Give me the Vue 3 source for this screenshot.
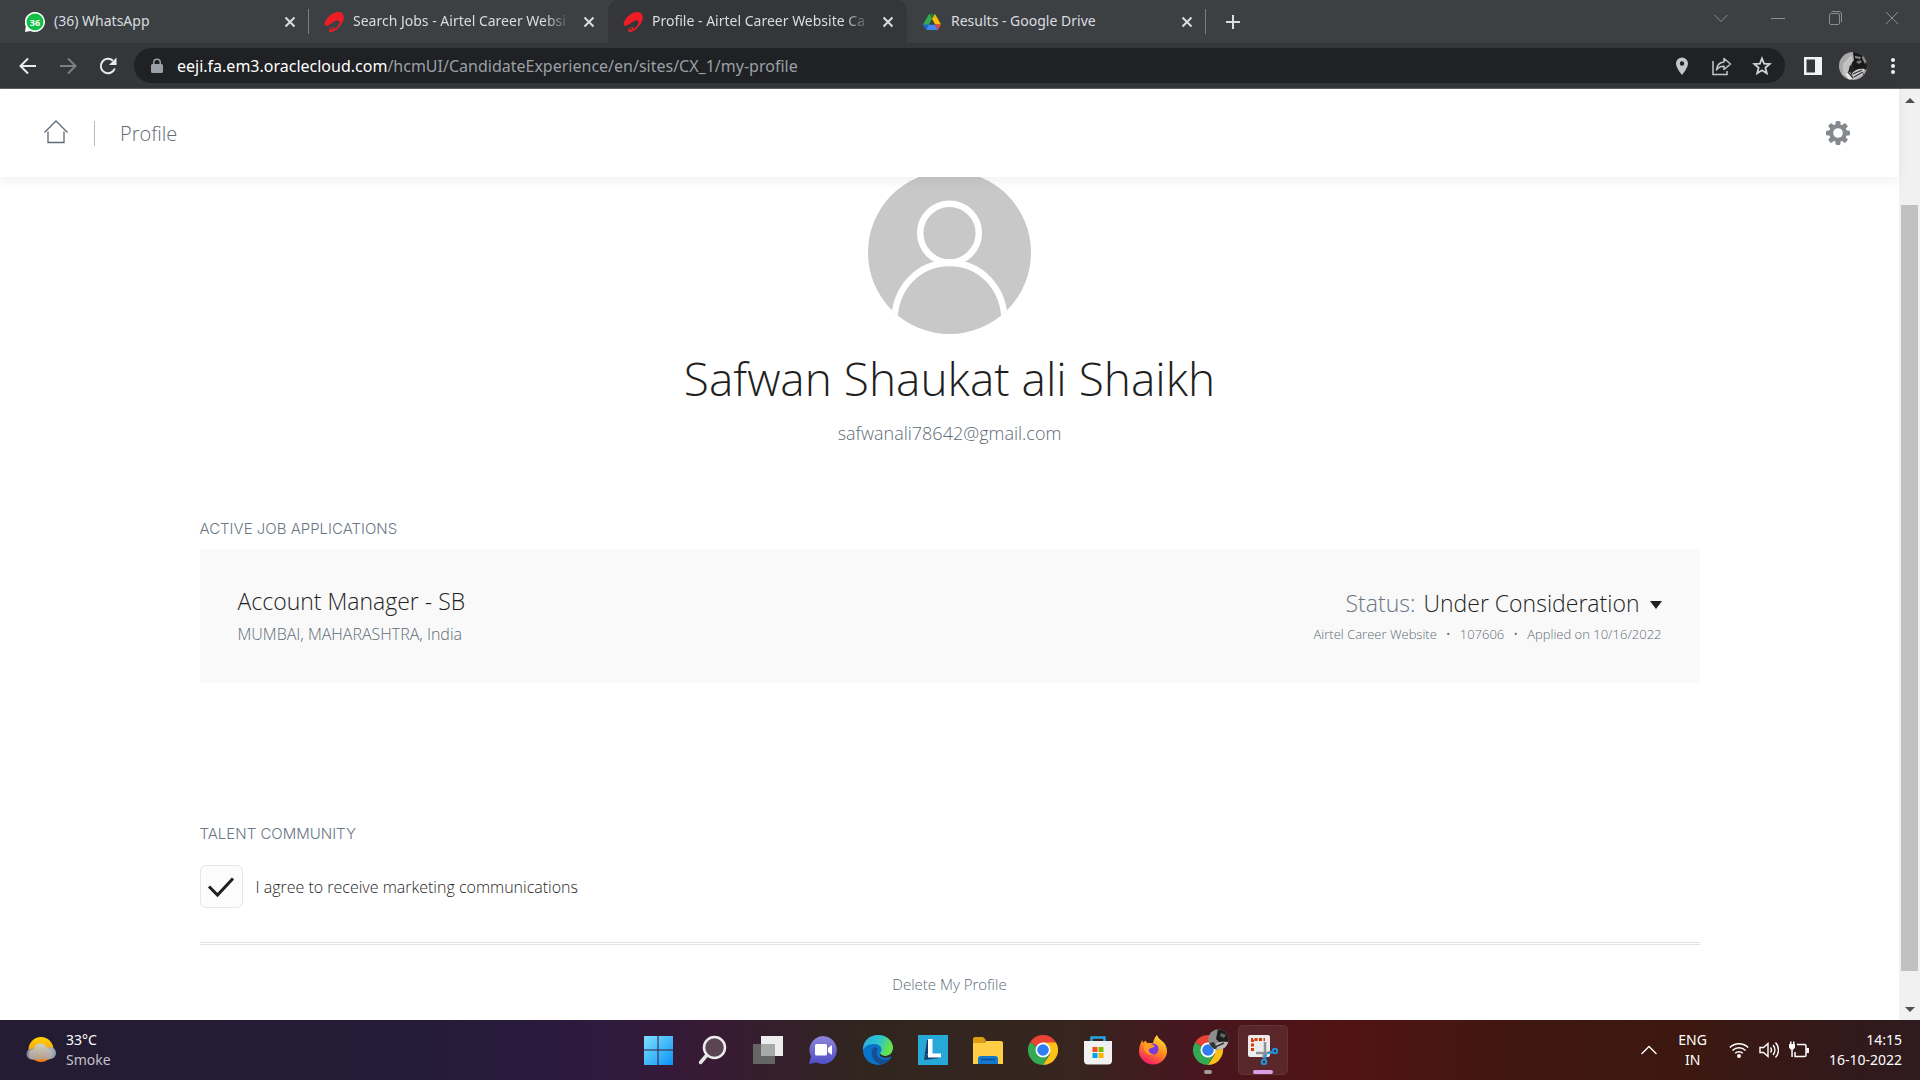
<script setup>
import { ref } from 'vue'

const tabs = [
  { title: '(36) WhatsApp', icon: 'whatsapp', divider: true },
  { title: 'Search Jobs - Airtel Career Websi', icon: 'airtel', faded: true },
  { title: 'Profile - Airtel Career Website Ca', icon: 'airtel', faded: true, active: true },
  { title: 'Results - Google Drive', icon: 'drive', divider: true },
]
const agreed = ref(true)
const meta = ['Airtel Career Website', '107606', 'Applied on 10/16/2022']
</script>

<template>
  <div class="desktop">
    <header class="browser">
      <div class="tab-strip">
        <div v-for="t in tabs" :key="t.title" class="tab" :class="{ active: t.active, divider: t.divider }">
          <svg v-if="t.icon === 'whatsapp'" class="favicon" viewBox="0 0 20 20">
            <path d="M10 0a10 10 0 1 1-4.600 18.900L0 20l.8-5.700A10 10 0 0 1 10 0z" fill="#fff" />
            <circle cx="10" cy="10" r="8.500" fill="#12c143" />
            <text x="10" y="13.500" text-anchor="middle" class="badge">36</text>
          </svg>
          <svg v-else-if="t.icon === 'airtel'" class="favicon" viewBox="0 0 20 20">
            <path d="M1 10C0 12 .5 14.500 3 13.800c3-.8 6.500-4.800 10-5.300 2.500-.3 3.200 1.500 2.200 3.500-1.200 2.500-3.600 4.300-5.200 5.300.8-1.200.2-2.400-1.200-2.300C6 15.200 4.800 17.500 5.200 19c.6 1.600 3 1 5.800-.6 4.500-2.700 8.200-7.900 8.700-12C20.200 2.300 17.800 0 14 0 8.500 0 3 5.500 1 10zM6.700 17.900c-.5-.6.2-1.800 1.600-2.200.9-.1 1.200.4.7 1-.7.800-1.800 1.500-2.300 1.200z" fill="#ee1c25" />
          </svg>
          <svg v-else class="favicon" viewBox="0 0 20 20">
            <path d="M7 2h6L7.200 12.400 4.200 17 1 12.500z" fill="#34a853" />
            <path d="M13 2l6 10.500h-6L7 2z" fill="#fbbc04" />
            <path d="M7 2h6l-3 5.200z" fill="#188038" />
            <path d="M1 12.500h6L4.300 18z" fill="#1967d2" />
            <path d="M7 12.500h6L16 18H4.300z" fill="#4285f4" />
            <path d="M13 12.500h6L16 18z" fill="#ea4335" />
            <path d="M10 7.200l3 5.300H7z" fill="#3c4043" />
          </svg>
          <span class="tab-title" :class="{ faded: t.faded }">{{ t.title }}</span>
          <button class="tab-close" aria-label="Close tab">
            <svg width="12" height="12" viewBox="0 0 12 12"><path d="M1.500 1.500l9 9M10.500 1.500l-9 9" stroke="#dadce0" stroke-width="2" /></svg>
          </button>
        </div>
        <button class="new-tab" aria-label="New tab">
          <svg width="16" height="16" viewBox="0 0 16 16"><path d="M8 1v14M1 8h14" stroke="#dadce0" stroke-width="2" /></svg>
        </button>
        <div class="window-controls">
          <button aria-label="Search tabs"><svg width="16" height="16" viewBox="0 0 16 16" class="thin"><path d="M1.500 5L8 11.500 14.500 5" /></svg></button>
          <button aria-label="Minimize"><svg width="16" height="16" viewBox="0 0 16 16" class="thin"><path d="M1 8.500h14" /></svg></button>
          <button aria-label="Restore"><svg width="16" height="16" viewBox="0 0 16 16" class="thin"><rect x="2.500" y="3.500" width="10" height="11" rx="1.500" /><path d="M4.500 1.500H12a2.500 2.500 0 0 1 2.500 2.500v8" /></svg></button>
          <button aria-label="Close window"><svg width="16" height="16" viewBox="0 0 16 16" class="thin"><path d="M2 2l12 12M14 2L2 14" /></svg></button>
        </div>
      </div>

      <div class="toolbar">
        <button class="nav" aria-label="Back"><svg width="20" height="20" viewBox="0 0 20 20" fill="none" stroke="#e8eaed" stroke-width="2"><path d="M18 10H3M10 2.500L2.500 10l7.500 7.500" /></svg></button>
        <button class="nav" aria-label="Forward"><svg width="20" height="20" viewBox="0 0 20 20" fill="none" stroke="#7d8083" stroke-width="2"><path d="M2 10h15M10 2.500l7.500 7.500-7.500 7.500" /></svg></button>
        <button class="nav" aria-label="Reload"><svg width="20" height="20" viewBox="0 0 20 20" fill="none" stroke="#e8eaed" stroke-width="2"><path d="M16.800 12.500A7.200 7.200 0 1 1 15 4.800" /><path d="M18.500 1.500v7.500H11z" fill="#e8eaed" stroke="none" /></svg></button>
        <div class="omnibox">
          <svg width="12" height="16" viewBox="0 0 12 16"><path d="M1.500 6H2V4.500a4 4 0 0 1 8 0V6h.5A1.500 1.500 0 0 1 12 7.500v6A1.500 1.500 0 0 1 10.500 15h-9A1.500 1.500 0 0 1 0 13.500v-6A1.500 1.500 0 0 1 1.500 6zm2 0h5V4.500a2.500 2.500 0 0 0-5 0z" fill="#9aa0a6" /></svg>
          <span class="url"><b>eeji.fa.em3.oraclecloud.com</b>/hcmUI/CandidateExperience/en/sites/CX_1/my-profile</span>
          <div class="omni-actions">
            <button aria-label="Location"><svg width="20" height="20" viewBox="0 0 20 20"><path d="M10 1.500a6 6 0 0 0-6 6c0 4.500 6 11.500 6 11.500s6-7 6-11.500a6 6 0 0 0-6-6zm0 8.200a2.200 2.200 0 1 1 0-4.400 2.200 2.200 0 0 1 0 4.400z" fill="#c4c6c8" /></svg></button>
            <button aria-label="Share"><svg width="20" height="20" viewBox="0 0 20 20" fill="none" stroke="#c4c6c8" stroke-width="1.500"><path d="M1 5v13.500h14V15" /><path d="M12 2.500L18.500 8 12 13.500v-3.300c-3.500 0-6 1.200-7.500 3.800.3-4.300 2.700-7.500 7.500-8z" stroke-linejoin="round" /></svg></button>
            <button aria-label="Bookmark"><svg width="20" height="20" viewBox="0 0 20 20" fill="none" stroke="#d0d2d4" stroke-width="1.800"><path d="M10 2.500l2.100 5.200 5.600.4-4.300 3.600 1.400 5.500-4.800-3-4.800 3 1.400-5.500L2.300 8.100l5.600-.4z" /></svg></button>
          </div>
        </div>
        <div class="extras">
          <button aria-label="Side panel"><svg width="20" height="20" viewBox="0 0 20 20"><path d="M1 1h18v18H1z" fill="#f1f3f4" /><path d="M3.500 3.500h8.500v13H3.500z" fill="#35363a" /></svg></button>
          <button aria-label="Account"><svg width="28" height="28" viewBox="0 0 28 28"><defs><clipPath id="face"><circle cx="14" cy="14" r="14" /></clipPath></defs><g clip-path="url(#face)"><rect width="28" height="28" fill="#a9a9a9" /><path d="M14 0h14v17l-6 3-8-3-2-5 3-4z" fill="#1a1a1a" /><path d="M16 4l6 1-1 2-5-1zM24 2l4 6-2 4-3-6z" fill="#8c8c8c" /><path d="M17 10l4-2 2 2-3 2z" fill="#777" /><path d="M4 12l8-9 2 5-2 5-3 8-5 2z" fill="#c2c2c2" /><path d="M11 13l4 2 2 4-5 5-3-3z" fill="#222" /><path d="M13 21c4-4 8-5 13-4l-3 6-8 4z" fill="#cfcfcf" /><path d="M6 22l5-2 3 6-4 2z" fill="#e6e6e6" /><path d="M14 22l9-4M15 25l9-5M9 20l5 6M24 22l4 2" stroke="#333" stroke-width="1.300" /></g></svg></button>
          <button aria-label="Menu"><svg width="6" height="20" viewBox="0 0 6 20" fill="#f1f3f4"><circle cx="3" cy="4" r="2" /><circle cx="3" cy="10" r="2" /><circle cx="3" cy="16" r="2" /></svg></button>
        </div>
      </div>
    </header>

    <div class="viewport">
      <div class="page">
        <nav class="page-header">
          <a href="#" class="home" aria-label="Home"><svg width="26" height="26" viewBox="0 0 26 26" fill="none" stroke="#5d6b77" stroke-width="1.300"><path d="M1.500 13.500L13 2l11.500 11.500M5 12.500v11h16v-11" /></svg></a>
          <span class="crumb">Profile</span>
          <button class="gear" aria-label="Settings">
            <svg width="24" height="24" viewBox="0 0 24 24"><g fill="#85898d"><circle cx="12" cy="12" r="9" /><rect v-for="a in [0, 45, 90, 135]" :key="a" x="9.500" y="0" width="5" height="24" rx="1.500" :transform="`rotate(${a} 12 12)`" /></g><circle cx="12" cy="12" r="4.800" fill="#fff" /></svg>
          </button>
        </nav>

        <main class="content">
          <section class="person">
            <svg class="avatar" viewBox="0 0 164 164">
              <defs><clipPath id="disc"><circle cx="82" cy="82" r="82" /></clipPath></defs>
              <g clip-path="url(#disc)">
                <rect width="164" height="164" fill="#c8c8c8" />
                <g fill="none" stroke="#fff" stroke-width="6.500">
                  <circle cx="82" cy="62.500" r="29.500" />
                  <path d="M26.500 152C26.500 118 50 92.500 82 92.500S137.500 118 137.500 152" />
                </g>
              </g>
            </svg>
            <h1>Safwan Shaukat ali Shaikh</h1>
            <p class="email">safwanali78642@gmail.com</p>
          </section>

          <section class="applications">
            <h2>ACTIVE JOB APPLICATIONS</h2>
            <article class="card">
              <div class="job">
                <a href="#" class="job-title">Account Manager - SB</a>
                <p class="place">MUMBAI, MAHARASHTRA, India</p>
              </div>
              <div class="state">
                <p class="status">Status: <button>Under Consideration<i class="caret"></i></button></p>
                <ul class="meta"><li v-for="m in meta" :key="m">{{ m }}</li></ul>
              </div>
            </article>
          </section>

          <section class="community">
            <h2>TALENT COMMUNITY</h2>
            <label class="agree">
              <span class="tick">
                <input v-model="agreed" type="checkbox" />
                <svg v-if="agreed" width="28" height="22" viewBox="0 0 28 22"><path d="M2 10.500l8.500 8.500L26 2.500" fill="none" stroke="#1f1f1f" stroke-width="3" /></svg>
              </span>
              I agree to receive marketing communications
            </label>
            <hr />
            <button class="delete">Delete My Profile</button>
          </section>
        </main>
      </div>
      <div class="scrollbar">
        <i class="arrow up"></i>
        <div class="thumb"></div>
        <i class="arrow down"></i>
      </div>
    </div>

    <footer class="taskbar">
      <button class="weather">
        <svg width="30" height="30" viewBox="0 0 30 30">
          <defs>
            <linearGradient id="sun" x1="0" y1="0" x2="0" y2="1"><stop offset="0" stop-color="#ffd400" /><stop offset="1" stop-color="#f4790b" /></linearGradient>
            <linearGradient id="haze" x1="0" y1="0" x2="0" y2="1"><stop offset="0" stop-color="#c9d3cc" /><stop offset="1" stop-color="#b39f94" /></linearGradient>
          </defs>
          <circle cx="15" cy="14.500" r="12.500" fill="url(#sun)" />
          <circle cx="6" cy="19" r="5.500" fill="#8797ac" opacity=".9" />
          <circle cx="24" cy="18" r="6" fill="#9fb0c8" opacity=".9" />
          <path d="M6 24.500a5.500 5.500 0 0 1 1.500-10.300 7.200 7.200 0 0 1 14.200 0A5.500 5.500 0 0 1 23 24.500z" fill="url(#haze)" opacity=".93" />
        </svg>
        <span><b>33°C</b><em>Smoke</em></span>
      </button>

      <div class="apps">
        <button aria-label="Start"><svg viewBox="0 0 30 30"><defs><linearGradient id="win" x1="0" y1="0" x2="1" y2="1"><stop offset="0" stop-color="#7fe0ff" /><stop offset="1" stop-color="#0a93f5" /></linearGradient></defs><path d="M1 1h13.500v13.500H1zM15.500 1H30v13.500H15.500zM1 15.500h13.500V30H1zM15.500 15.500H30V30H15.500z" fill="url(#win)" /></svg></button>
        <button aria-label="Search"><svg viewBox="0 0 30 30"><path d="M9 20L2.500 27.500" stroke="#e6e6e6" stroke-width="3.500" stroke-linecap="round" /><circle cx="16.500" cy="12.500" r="10.500" fill="#5b4552" stroke="#ececec" stroke-width="2.500" /></svg></button>
        <button aria-label="Task view"><svg viewBox="0 0 30 30"><path d="M8 1h22v20H8z" fill="#ededed" /><path d="M0 9h22v20H0z" fill="#656565" /><path d="M8 9h14v12H8z" fill="#a9a9a9" /></svg></button>
        <button aria-label="Chat"><svg viewBox="0 0 30 30"><defs><linearGradient id="chat" x1="0" y1="0" x2="0" y2="1"><stop offset="0" stop-color="#8f84d8" /><stop offset="1" stop-color="#4f50c8" /></linearGradient></defs><path d="M15 1a14 14 0 1 1-6.500 26.500L1 29l2-7.500A14 14 0 0 1 15 1z" fill="url(#chat)" /><rect x="7" y="9" width="12" height="11.500" rx="1.500" fill="#fff" /><path d="M20 13l4-3v10l-4-3z" fill="#fff" /></svg></button>
        <button aria-label="Edge"><svg viewBox="0 0 30 30"><defs><linearGradient id="e1" x1="0" y1="0" x2="1" y2=".3"><stop offset="0" stop-color="#2aa9e8" /><stop offset=".6" stop-color="#30c6c9" /><stop offset="1" stop-color="#67e544" /></linearGradient></defs><circle cx="15" cy="15" r="15" fill="#0a74cb" /><path d="M0 13C1 5 7 0 15 0c9 0 15 6 15 13 0 5-4 8-8 8-3 0-5-1-5-2.500 0-1 1.500-1.500 1.500-4C18.500 11 15 9 11 9 6 9 2 11 0 15z" fill="url(#e1)" /><path d="M10 13c-2 3-2 8 1 12 2 3 6 5 9 4 3-.8 6-3 7.500-5.700-4 2-9 1.700-12-1C13.500 20.500 13 17 15 14c-1.500-2-4-2-5-1z" fill="#154f91" /><path d="M30 14v6l-2 1.500c-4 2-9 1.500-11-1l0-2c1 1.500 3 2.500 5 2.500 4 0 7-2 8-7z" fill="#33261f" /></svg></button>
        <button aria-label="L app"><svg viewBox="0 0 30 30"><path d="M0 0h30v30H0z" fill="#26a9d8" /><path d="M9 5h5v14H9l-3 6z" fill="#173c6e" /><path d="M9 20h14l-1 3-16 2z" fill="#173c6e" /><path d="M10 4h4.500v14.500H23v4H10z" fill="#fff" /></svg></button>
        <button aria-label="File Explorer"><svg viewBox="0 0 30 30"><path d="M0 4a2 2 0 0 1 2-2h8l3 3-2 3H0z" fill="#dd9d11" /><path d="M0 8h11l2-2h15a2 2 0 0 1 2 2v21H0z" fill="#ffce45" /><path d="M5 29v-5a3 3 0 0 1 3-3h14a3 3 0 0 1 3 3v5z" fill="#1379cf" /><path d="M8 24.500h14" stroke="#0b4d92" stroke-width="1.500" /></svg></button>
        <button aria-label="Chrome"><svg viewBox="0 0 30 30"><path d="M15 15L2 7.500a15 15 0 0 1 26 0z" fill="#ea4335" /><path d="M15 15L2 7.500A15 15 0 0 0 15 30l6.500-11z" fill="#34a853" /><path d="M15 7.500h13A15 15 0 0 1 15 30l7-11z" fill="#fbc116" /><circle cx="15" cy="15" r="7.500" fill="#fff" /><circle cx="15" cy="15" r="5.800" fill="#2f7df0" /></svg></button>
        <button aria-label="Microsoft Store"><svg viewBox="0 0 30 30"><path d="M8.500 8V2.500h13V8" fill="none" stroke="#27a6e6" stroke-width="2.500" /><path d="M1 6h28v19.500a4 4 0 0 1-4 4H5a4 4 0 0 1-4-4z" fill="#f1f1f1" /><path d="M9.500 12h5v5h-5z" fill="#f1511b" /><path d="M15.500 12h5v5h-5z" fill="#80b900" /><path d="M9.500 18h5v5h-5z" fill="#00a3ee" /><path d="M15.500 18h5v5h-5z" fill="#fbb500" /></svg></button>
        <button aria-label="Firefox"><svg viewBox="0 0 30 30"><defs><linearGradient id="ff" x1=".8" y1="0" x2=".3" y2="1"><stop offset="0" stop-color="#ffe63a" /><stop offset=".5" stop-color="#ff8a1c" /><stop offset="1" stop-color="#f5166c" /></linearGradient></defs><path d="M15 8c1-4 2-6 4-8 1 3 3 4 5 6 3 2 5 6 5 10a14 13.500 0 0 1-28 0C1 11 3 8 4 5c.5 1 1 2 1 3 1-1.500 2-2 3-2.500 0 1 .5 2 1.500 2.500z" fill="url(#ff)" /><circle cx="15" cy="14" r="5.500" fill="#7a3bdc" /><path d="M5 8c5-1 8 1 12 3-2 2-5 2-6 3-1 3 2 5 5 5-5 2-10-1-10-6z" fill="#ff9a22" /></svg></button>
        <button class="running" aria-label="Chrome profile"><svg viewBox="0 0 30 30" class="spill"><defs><clipPath id="mini"><circle cx="25.500" cy="4.500" r="10.300" /></clipPath></defs><path d="M15 15L2 7.500a15 15 0 0 1 26 0z" fill="#ea4335" /><path d="M15 15L2 7.500A15 15 0 0 0 15 30l6.500-11z" fill="#34a853" /><path d="M15 7.500h13A15 15 0 0 1 15 30l7-11z" fill="#fbc116" /><circle cx="15" cy="15" r="7.500" fill="#fff" /><circle cx="15" cy="15" r="5.800" fill="#2f7df0" /><g clip-path="url(#mini)"><rect x="14" y="-7" width="24" height="24" fill="#8d8d8d" /><path d="M25-6h11v13l-9 1-4-4z" fill="#1d1d1d" /><path d="M28-2l5 2-2 3-4-2z" fill="#666" /><path d="M20 12c3-5 8-6 15-5-1 5-5 8-9 8z" fill="#bdbdbd" /><path d="M16 8l5-1 3 6-3 2z" fill="#333" /><path d="M22 12l9-4" stroke="#333" stroke-width="1.500" /></g></svg></button>
        <button class="running current" aria-label="Snipping Tool"><svg viewBox="0 0 30 30"><rect width="22" height="22" rx="2" fill="#ececee" /><path d="M4.500 16V4.500H17" fill="none" stroke="#d83b01" stroke-width="3" stroke-dasharray="3 1.500" /><path d="M17 7v10l-2 6M8 18h10l7-1" fill="none" stroke="#8e9196" stroke-width="2.500" /><circle cx="16" cy="27" r="2.300" fill="none" stroke="#1b93d8" stroke-width="2" /><circle cx="27" cy="16" r="2.300" fill="none" stroke="#1b93d8" stroke-width="2" /><path d="M17 24l1-5M20 18l5-1" stroke="#1b93d8" stroke-width="2" /></svg></button>
      </div>

      <div class="tray">
        <button aria-label="Hidden icons"><svg width="18" height="18" viewBox="0 0 18 18" fill="none" stroke="#fff" stroke-width="1.300"><path d="M1.500 13L9 5.500l7.500 7.500" /></svg></button>
        <button class="lang"><span>ENG</span><span>IN</span></button>
        <button class="quick" aria-label="Network, volume and battery">
          <svg width="20" height="20" viewBox="0 0 20 20" fill="none" stroke="#fff" stroke-width="1.500"><path d="M.8 7.500a13 13 0 0 1 18.400 0M3.500 10.500a9.300 9.300 0 0 1 13 0M6.200 13.300a5.500 5.500 0 0 1 7.600 0" /><circle cx="10" cy="16" r="1.200" fill="#fff" /></svg>
          <svg width="20" height="20" viewBox="0 0 20 20" fill="none" stroke="#fff" stroke-width="1.400"><path d="M1 7.500h3.500L9 3.500v13l-4.500-4H1zM11.500 7.500a4 4 0 0 1 0 5M14 5a7.500 7.500 0 0 1 0 10M16.500 2.500a11 11 0 0 1 0 15" /></svg>
          <svg width="20" height="20" viewBox="0 0 20 20" fill="none" stroke="#fff" stroke-width="1.500"><path d="M8 4.500h7.500A1.500 1.500 0 0 1 17 6v9a1.500 1.500 0 0 1-1.500 1.500H6V12" /><path d="M0 4h6v3.500L4.500 9.500h-3L0 7.500zM1 1.500h1.500V4H1zM4 1.500h1.500V4H4zM2.300 9h1.500v8H2.300zM17.500 8h2.500v5h-2.500z" fill="#fff" stroke="none" /></svg>
        </button>
        <button class="clock"><span>14:15</span><span>16-10-2022</span></button>
      </div>
    </footer>
  </div>
</template>

<style>
body {
  margin: 0;
}
</style>

<style scoped>
* {
  box-sizing: border-box;
}

.desktop {
  display: flex;
  flex-direction: column;
  min-height: 100vh;
  background: #fff;
  color: #1f1f1f;
  font-family: 'Open Sans', 'Noto Sans', sans-serif;
  font-weight: 300;
}

button {
  display: flex;
  align-items: center;
  justify-content: center;
  padding: 0;
  border: 0;
  background: none;
  color: inherit;
  font: inherit;
}

svg {
  display: block;
  flex: none;
}

a {
  color: inherit;
  text-decoration: none;
}

h1,
h2,
p,
ul {
  margin: 0;
  padding: 0;
  font-weight: 300;
}

/* browser chrome */
.browser {
  background: #35363a;
  font-family: 'Noto Sans', 'Open Sans', sans-serif;
  font-weight: 400;
}

.tab-strip {
  display: flex;
  height: 43px;
  padding-left: 10px;
  background: #3c4043;
}

.tab {
  position: relative;
  display: flex;
  align-items: center;
  gap: 9px;
  flex: 0 1 299px;
  min-width: 0;
  padding: 0 11px 0 15px;
  color: #dadce0;
  font-size: 14px;
}

.tab.active {
  background: #35363a;
  border-radius: 10px 10px 0 0;
}

.tab.divider::after {
  content: '';
  position: absolute;
  right: 0;
  top: 9px;
  width: 1px;
  height: 25px;
  background: #7b7e81;
}

.favicon {
  width: 20px;
  height: 20px;
}

.badge {
  fill: #fff;
  font-size: 9px;
  font-weight: 700;
}

.tab-title {
  flex: 1;
  min-width: 0;
  padding-bottom: 2px;
  white-space: nowrap;
}

.faded {
  mask-image: linear-gradient(to right, #000 calc(100% - 28px), transparent);
}

.tab-close {
  width: 16px;
  height: 16px;
}

.new-tab {
  width: 54px;
}

.window-controls {
  display: flex;
  margin-left: auto;
}

.window-controls button {
  width: 57px;
  height: 36px;
}

.thin {
  fill: none;
  stroke: #8b8e90;
  stroke-width: 1;
}

.toolbar {
  display: flex;
  align-items: center;
  gap: 12px;
  height: 46px;
  padding: 0 24px 0 14px;
  border-bottom: 1px solid #5f6063;
}

.nav {
  width: 28px;
  height: 28px;
}

.omnibox {
  display: flex;
  align-items: center;
  gap: 14px;
  flex: 1;
  min-width: 0;
  height: 35px;
  padding: 0 13px 0 17px;
  border-radius: 18px;
  background: #202124;
}

.url {
  flex: 1;
  min-width: 0;
  overflow: hidden;
  white-space: nowrap;
  color: #9aa0a6;
  font-size: 16px;
}

.url b {
  color: #fff;
  font-weight: 400;
}

.omni-actions,
.extras {
  display: flex;
  align-items: center;
  gap: 20px;
}

.extras {
  gap: 16px;
  margin-left: 6px;
}

.extras button:last-child {
  margin-left: 7px;
}

/* page */
.viewport {
  display: flex;
  flex: 1;
}

.page {
  flex: 1;
  min-width: 0;
}

.page-header {
  position: relative;
  z-index: 1;
  display: flex;
  align-items: center;
  height: 88px;
  padding: 0 49px 0 43px;
  background: #fff;
  box-shadow: 0 4px 12px rgba(0, 0, 0, 0.06);
}

.home {
  padding: 0 25px 2px 0;
}

.crumb {
  padding: 1px 0 0 25px;
  border-left: 1px solid #b6bdc3;
  color: #5d6b77;
  font-size: 20px;
  line-height: 24px;
}

.gear {
  margin-left: auto;
}

.content {
  width: calc(100% - 399px);
  margin: -6px auto 0;
}

.person {
  display: flex;
  flex-direction: column;
  align-items: center;
}

.avatar {
  width: 163px;
  height: 163px;
}

h1 {
  margin-top: 11px;
  font-size: 46px;
  line-height: 66px;
}

.email {
  margin-top: 8px;
  color: #5d6b77;
  font-size: 18px;
  line-height: 28px;
}

h2 {
  color: #6b7785;
  font-family: Inter, 'Open Sans', sans-serif;
  font-size: 15px;
  line-height: 20px;
}

.applications {
  margin-top: 72px;
}

.card {
  display: flex;
  justify-content: space-between;
  margin-top: 10px;
  padding: 34px 38px;
  background: #f9f9f9;
}

.job-title,
.status {
  display: flex;
  gap: 8px;
  font-size: 23px;
  line-height: 36px;
}

.place {
  color: #5d6b77;
  font-size: 16px;
  line-height: 30px;
}

.state {
  display: flex;
  flex-direction: column;
  align-items: flex-end;
  padding-top: 2px;
}

.status {
  color: #6b7785;
}

.status button {
  color: #1f1f1f;
}

.caret {
  margin: 4px 0 0 10px;
  border: 6px solid transparent;
  border-top: 8px solid #1f1f1f;
  border-bottom: 0;
}

.meta {
  display: flex;
  list-style: none;
  color: #5d6b77;
  font-size: 13px;
  line-height: 26px;
}

.meta li + li::before {
  content: '•';
  margin: 0 9px;
}

.community {
  margin-top: 141px;
}

.agree {
  display: flex;
  align-items: center;
  gap: 13px;
  width: max-content;
  margin-top: 21px;
  font-size: 16px;
}

.tick {
  display: grid;
  place-items: center;
}

.tick > * {
  grid-area: 1 / 1;
}

.tick input {
  appearance: none;
  width: 43px;
  height: 43px;
  margin: 0;
  border: 1px solid #e6e6e6;
  border-radius: 6px;
  background: #fcfcfc;
}

.tick svg {
  pointer-events: none;
}

hr {
  height: 3px;
  margin: 34px 0 0;
  border: solid #e2e2e2;
  border-width: 1px 0;
}

.delete {
  margin: 27px auto 12px;
  color: #5d6b77;
  font-size: 15px;
  line-height: 24px;
}

.scrollbar {
  display: flex;
  flex-direction: column;
  align-items: center;
  width: 21px;
  padding: 9px 0 8px;
  background: #f1f1f1;
}

.thumb {
  flex: 1;
  width: 17px;
  margin: 102px 0 36px;
  background: #c1c1c1;
}

.arrow {
  border: 5px solid transparent;
}

.arrow.up {
  border-top: 0;
  border-bottom-color: #505050;
}

.arrow.down {
  border-bottom: 0;
  border-top-color: #505050;
}

/* taskbar */
.taskbar {
  display: grid;
  grid-template-columns: 1fr auto 1fr;
  align-items: center;
  height: 60px;
  padding: 0 18px;
  color: #fff;
  font-family: 'Noto Sans', 'Open Sans', sans-serif;
  font-size: 14px;
  font-weight: 400;
  line-height: 20px;
  background: linear-gradient(to right, #241c32 0, #241c38 21%, #2d1a3e 31%, #381a34 37%, #30261f 45%, #37251f 56%, #47161f 62%, #511313 70%, #421711 78%, #3c1811 88%, #2e1a1f 100%);
}

.weather {
  gap: 10px;
  justify-self: start;
  margin-left: 8px;
  text-align: left;
}

.weather span,
.lang,
.clock {
  display: flex;
  flex-direction: column;
}

.weather b {
  font-weight: 400;
}

.weather em {
  font-style: normal;
  color: #c4c1c8;
}

.apps {
  display: flex;
  gap: 5px;
}

.apps button {
  position: relative;
  width: 50px;
  height: 50px;
  border-radius: 5px;
}

.apps svg {
  width: 30px;
  height: 30px;
}

.apps .spill {
  overflow: visible;
}

.running::after {
  content: '';
  position: absolute;
  bottom: 1px;
  width: 8px;
  height: 4px;
  border-radius: 2px;
  background: #a39a9c;
}

.apps .current {
  background: rgba(255, 255, 255, 0.08);
  box-shadow: inset 0 0 0 1px rgba(255, 255, 255, 0.06);
}

.current::after {
  width: 20px;
  background: #dd9ee8;
}

.tray {
  display: flex;
  align-items: center;
  justify-self: end;
}

.lang {
  margin: 0 22px 0 20px;
}

.quick {
  gap: 10px;
  margin-right: 20px;
}

.clock {
  align-items: flex-end;
}
</style>
